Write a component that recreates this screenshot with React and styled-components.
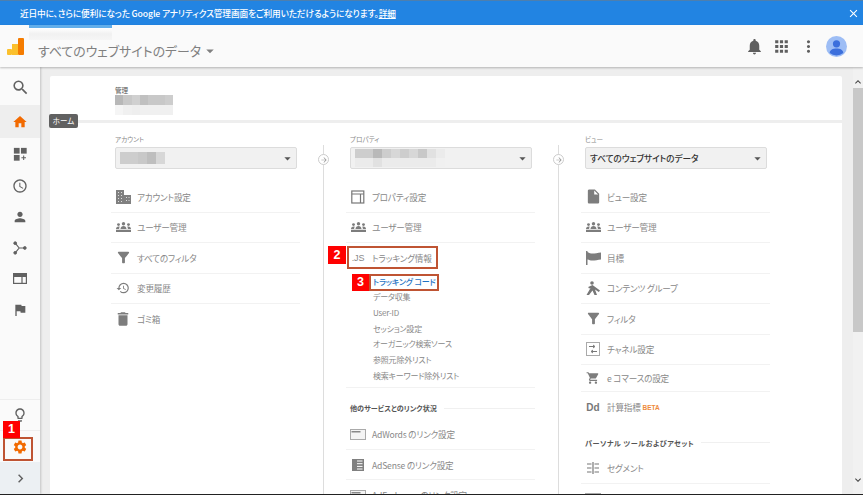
import React from 'react';
import styled, { createGlobalStyle } from 'styled-components';
import {
    MdSearch, MdHome, MdAccessTime, MdPerson, MdFlag, MdLightbulbOutline, MdSettings,
    MdChevronRight, MdFilterAlt, MdHistory, MdDelete, MdInsertDriveFile,
    MdShoppingCart, MdNotifications, MdApps, MdMoreVert, MdArrowDropDown, MdClose,
    MdKeyboardArrowUp, MdKeyboardArrowDown, MdArrowForward
} from 'react-icons/md';

const FONT = '"Noto Sans CJK JP", "Noto Sans", "Liberation Sans", sans-serif';

const GlobalStyle = createGlobalStyle`
    html, body {
        margin: 0;
        height: 100%;
        overflow: hidden;
        background: #eee;
    }
    body {
        font-family: ${FONT};
        font-feature-settings: "palt";
    }
`;

const Page = styled('div')`
    width: 863px;
    height: 495px;
    display: flex;
    flex-direction: column;
    overflow: hidden;
    border-bottom: 1px solid #222;
    box-sizing: border-box;
`;

const Banner = styled('div')`
    height: 25px;
    flex: none;
    box-sizing: border-box;
    background: #2284e2;
    border-top: 1px solid #4d7fae;
    color: #fff;
    display: flex;
    align-items: center;
    justify-content: space-between;
    padding: 0 3px 0 20px;
    font-size: 8.7px;
    letter-spacing: -.13px;
    font-weight: 500;
    a {
        color: #fff;
        text-decoration: underline;
    }
`;

const Header = styled('header')`
    height: 42px;
    flex: none;
    position: relative;
    z-index: 2;
    background: #fafafa;
    box-shadow: 0 1px 2px rgba(0, 0, 0, .25);
    display: flex;
    align-items: center;
    padding: 0 16px 0 7px;
`;

const Redaction = styled('div')`
    position: absolute;
    left: 29px;
    top: 0;
    width: 83px;
    height: 15px;
    background: linear-gradient(#62aeea 0, #62aeea 3px, #fff 3px, #f1f1f1 9px, #f6f6f6 15px);
`;

const TitleBlock = styled('div')`
    margin-left: 14px;
    padding-top: 9px;
`;

const Title = styled('div')`
    font-size: 12.9px;
    line-height: 18px;
    color: #808080;
    display: flex;
    align-items: center;
    svg {
        font-size: 18px;
        margin-left: 0;
    }
`;

const HeaderTools = styled('div')`
    margin-left: auto;
    display: flex;
    align-items: center;
    color: #5f5f5f;
    font-size: 19px;
    gap: 8px;
    svg {
        display: block;
    }
`;

const Body = styled('div')`
    flex: 1;
    min-height: 0;
    display: flex;
`;

const Rail = styled('nav')`
    width: 40px;
    flex: none;
    position: relative;
    background: #fafafa;
    box-shadow: 1px 0 2px rgba(0, 0, 0, .18);
    display: flex;
    flex-direction: column;
    padding-top: 3px;
    box-sizing: border-box;
`;

const RailItem = styled('div')`
    height: ${(p) => p.$h || 31}px;
    flex: none;
    display: flex;
    align-items: center;
    justify-content: center;
    font-size: ${(p) => p.$size || 16}px;
    color: ${(p) => (p.$accent ? '#f26a00' : '#616161')};
    background: ${(p) => p.$bg || 'transparent'};
    border-top: ${(p) => (p.$line ? '1px solid #eee' : '0')};
    box-sizing: border-box;
    position: relative;
`;

const RailSpacer = styled('div')`
    flex: 1;
`;

const Badge = styled('span')`
    position: absolute;
    left: ${(p) => p.$left}px;
    top: ${(p) => p.$top}px;
    width: ${(p) => p.$size}px;
    height: ${(p) => p.$size}px;
    background: #f00;
    color: #fff;
    font: 700 12.5px/${(p) => p.$size}px "Liberation Sans", sans-serif;
    text-align: center;
    z-index: 3;
`;

const Marker = styled('span')`
    position: absolute;
    left: ${(p) => p.$left}px;
    top: ${(p) => p.$top}px;
    width: ${(p) => p.$w}px;
    height: ${(p) => p.$h}px;
    box-sizing: border-box;
    border: 2px solid #bf5433;
    z-index: 2;
`;

const Tip = styled('div')`
    position: absolute;
    left: 49px;
    top: 47px;
    height: 14px;
    width: 29px;
    border-radius: 2px;
    background: #616161;
    color: #fff;
    font-size: 7.5px;
    line-height: 14px;
    text-align: center;
    z-index: 4;
`;

const Content = styled('main')`
    flex: 1;
    min-width: 0;
    padding: 9px 11px 0 10px;
    background: #eee;
`;

const Card = styled('div')`
    background: #fff;
    height: 100%;
    border-radius: 2px 2px 0 0;
    overflow: hidden;
    position: relative;
`;

const CardHead = styled('div')`
    height: 47px;
    box-sizing: border-box;
    padding: 10px 0 0 65px;
    border-bottom: 3px solid #eee;
`;

const Tiny = styled('div')`
    font-size: 6.6px;
    line-height: 9px;
    color: ${(p) => (p.$dark ? '#555' : '#8a8a8a')};
`;

const Columns = styled('div')`
    display: flex;
    margin-left: 61px;
    padding-top: 12px;
    gap: 46px;
`;

const Column = styled('section')`
    width: 189px;
    flex: none;
    position: relative;
`;

const RuleLine = styled('span')`
    position: absolute;
    left: 212px;
    top: 10px;
    width: 1px;
    height: 400px;
    background: #ddd;
`;

const RuleKnob = styled('span')`
    position: absolute;
    left: 207px;
    top: 19px;
    width: 11px;
    height: 11px;
    box-sizing: border-box;
    border-radius: 50%;
    border: 1px solid #ccc;
    background: #fff;
    color: #999;
    font-size: 8px;
    display: flex;
    align-items: center;
    justify-content: center;
`;

const SelectLabel = styled(Tiny)`
    padding-left: 4px;
    height: 10px;
`;

const Select = styled('div')`
    margin: 2px 3px 13px 4px;
    height: 22px;
    box-sizing: border-box;
    background: #f1f1f1;
    border: 1px solid #dcdcdc;
    border-radius: 2px;
    display: flex;
    align-items: center;
    padding-left: 4px;
    font-size: 8.7px;
    letter-spacing: -.1px;
    font-weight: 500;
    color: #333;
    svg {
        margin-left: auto;
        font-size: 15px;
        color: #555;
        flex: none;
        margin-right: 1px;
    }
`;

const Row = styled('div')`
    height: ${(p) => p.$h || 30.5}px;
    box-sizing: border-box;
    display: flex;
    align-items: center;
    position: relative;
    border-bottom: ${(p) => (p.$plain ? '0' : '1px solid #f2f2f2')};
    font-size: 8.6px;
    letter-spacing: -.2px;
    color: #888;
    white-space: nowrap;
`;

const RowIcon = styled('span')`
    width: 26px;
    flex: none;
    box-sizing: border-box;
    padding-right: 2px;
    font-size: 15px;
    color: #7d7d7d;
    display: flex;
    align-items: center;
    justify-content: center;
    svg {
        display: block;
    }
`;

const Beta = styled('span')`
    color: #ee8a3c;
    font: 700 6.5px "Liberation Sans", sans-serif;
    letter-spacing: 0;
    margin-left: 2px;
`;

const DdMark = styled('span')`
    font: 700 10px "Liberation Sans", sans-serif;
    color: #777;
    letter-spacing: .2px;
`;

const JsMark = styled('span')`
    font: 9px "Liberation Sans", sans-serif;
    color: #888;
`;

const SubList = styled('div')`
    padding-bottom: 4px;
    border-bottom: 1px solid #f2f2f2;
`;

const SubItem = styled('div')`
    height: 15.7px;
    line-height: 15.7px;
    padding-left: 27px;
    font-size: 8px;
    letter-spacing: -.2px;
    color: ${(p) => (p.$active ? '#1f73c2' : '#888')};
    font-weight: ${(p) => (p.$active ? 500 : 400)};
    position: relative;
`;

const Section = styled('div')`
    margin: 12px 0 3px 4px;
    height: 16px;
    display: flex;
    align-items: center;
    gap: 7px;
    font-size: 7.1px;
    letter-spacing: ${(p) => (p.$wide ? '.5px' : '0')};
    font-weight: 700;
    color: #555;
    white-space: nowrap;
    &::after {
        content: '';
        flex: 1;
        height: 1px;
        background: #f0f0f0;
    }
`;

const MosaicGrid = styled('div')`
    display: grid;
    grid-template-columns: repeat(${(p) => p.$cols}, ${(p) => p.$w}px);
    grid-auto-rows: ${(p) => p.$h}px;
    flex: none;
`;

const MosaicCell = styled('span')`
    background: ${(p) => p.$c};
`;

const Logo = styled('svg')`
    width: 17px;
    height: 17px;
    flex: none;
    margin-top: 1px;
`;

const Scrollbar = styled('div')`
    width: 10px;
    flex: none;
    background: #f1f1f1;
    display: flex;
    flex-direction: column;
    align-items: center;
    color: #444;
    font-size: 12px;
    padding-bottom: 8px;
    box-sizing: border-box;
`;

const ScrollUp = styled('div')`
    height: 21px;
    display: flex;
    align-items: flex-end;
`;

const ScrollThumb = styled('div')`
    width: 10px;
    height: 244px;
    background: #c8c8c8;
`;

const ScrollFill = styled('div')`
    flex: 1;
`;

// 目隠しのモザイク部分
const Mosaic = ({ rows, w = 9, h = 9 }) => (
    <MosaicGrid $cols={rows[0].length} $w={w} $h={h}>
        {rows.flatMap((row, y) => row.map((c, x) => <MosaicCell key={`${y}-${x}`} $c={c} />))}
    </MosaicGrid>
);

const shade = (list) => list.map((v) => `rgb(${v},${v},${v})`);

const BuildingIcon = () => (
    <svg width="15" height="14" viewBox="0 0 15 14" fill="#808080">
        <path d="M0 0h8v14H0zM8 5h7v9H8z" />
        <path d="M2 2h1v1H2zM5 2h1v1H5zM2 5h1v1H2zM5 5h1v1H5zM2 8h1v1H2zM5 8h1v1H5zM2 11h1v1H2zM5 11h1v1H5zM10 7h1v1h-1zM12.500 7h1v1h-1zM10 10h1v1h-1zM12.500 10h1v1h-1z" fill="#ddd" />
    </svg>
);

const GroupIcon = () => (
    <svg width="15" height="10" viewBox="0 0 15 10" fill="#7d7d7d">
        <circle cx="2.500" cy="2.600" r="1.400" />
        <circle cx="7.500" cy="1.800" r="1.700" />
        <circle cx="12.500" cy="2.600" r="1.400" />
        <path d="M4.500 7c0-2 1.500-3 3-3s3 1 3 3zM0 7c0-1.500 1-2.500 2.500-2.500.6 0 1 .1 1.300.3C3.300 5.400 3.100 6.200 3.100 7zM15 7c0-1.500-1-2.500-2.500-2.500-.6 0-1 .1-1.300.3.500.6.700 1.400.7 2.200zM0 7.700h15V10H0z" />
    </svg>
);

const FrameIcon = () => (
    <svg width="14" height="14" viewBox="0 0 14 14" fill="none" stroke="#777" strokeWidth="1.200">
        <rect x=".8" y="1" width="12" height="12" />
        <path d="M.8 4h12M9.500 4v9" />
    </svg>
);

const GoalFlagIcon = () => (
    <svg width="15" height="14" viewBox="0 0 15 14" fill="#7d7d7d">
        <path d="M0 0h1.500v14H0zM1.500 1c2 1 3 1.500 5 1.500S12 2 15 1.500v7c-3 .5-6 1-8.500 1s-3-.6-5-1z" />
    </svg>
);

const ContentIcon = () => (
    <svg width="15" height="15" viewBox="0 0 15 15" fill="#777">
        <circle cx="6" cy="2" r="1.800" />
        <path d="M6.500 4 14 9.500 12.800 11 9 8.500l2 5.500H8.500L6.500 9.500 3 14H.5l4-7-1.500.5L2.200 6z" />
    </svg>
);

const ChannelIcon = () => (
    <svg width="14" height="14" viewBox="0 0 14 14" fill="none" stroke="#777">
        <rect x=".5" y=".5" width="13" height="13" stroke="#aaa" />
        <path d="M3 4.500h5.500M7 3l2 1.500L7 6M11 9.500H5.500M7 8 5 9.500 7 11" strokeWidth="1" />
    </svg>
);

const SegmentIcon = () => (
    <svg width="14" height="14" viewBox="0 0 14 14" stroke="#777" strokeWidth="1.200">
        <path d="M7 1v12M1 3h4.500M1 7h4.500M1 11h4.500M8.500 3H13M8.500 7H13M8.500 11H13" />
    </svg>
);

const AdWordsIcon = () => (
    <svg width="16" height="11" viewBox="0 0 16 11" fill="none">
        <rect x=".5" y=".5" width="15" height="10" fill="#f4f4f4" stroke="#aaa" />
        <rect x="1.500" y="2" width="9" height="1.500" fill="#888" />
    </svg>
);

const AdSenseIcon = () => (
    <svg width="12" height="12" viewBox="0 0 12 12">
        <rect width="12" height="12" fill="#808080" />
        <path d="M5 2h5.500M5 4.700h5.500M5 7.400h5.500M5 10h5.500" stroke="#fff" />
    </svg>
);

const DashIcon = () => (
    <svg width="15" height="15" viewBox="0 0 17 17" fill="#616161">
        <rect x="1" y="1" width="6.500" height="6.500" />
        <rect x="9" y="1" width="6.500" height="6.500" />
        <rect x="1" y="9" width="6.500" height="6.500" />
        <path d="M11.500 9.500h1.200v2h2v1.200h-2v2h-1.200v-2h-2v-1.200h2z" />
    </svg>
);

const BranchIcon = () => (
    <svg width="14" height="14" viewBox="0 0 16 16" fill="#616161" stroke="#616161">
        <circle cx="2.500" cy="2.500" r="1.600" />
        <circle cx="2.500" cy="13.500" r="1.600" />
        <circle cx="13.500" cy="8" r="1.600" />
        <path d="M2.500 2.500 7 8l-4.500 5.500M7 8h6.500" fill="none" strokeWidth="1.300" />
    </svg>
);

const WebIcon = () => (
    <svg width="14" height="11" viewBox="0 0 14 11" fill="none" stroke="#616161" strokeWidth="1.200">
        <rect x=".6" y=".6" width="12.800" height="9.800" />
        <path d="M.6 3.500h12.800M9 3.500v7" />
        <rect x="1" y="1" width="12" height="2.500" fill="#616161" stroke="none" />
    </svg>
);

const Avatar = () => (
    <svg width="21" height="21" viewBox="0 0 21 21">
        <circle cx="10.500" cy="10.500" r="10.500" fill="#9dbdf5" />
        <circle cx="10.500" cy="7.800" r="3.600" fill="#3c6fdc" />
        <path d="M3.700 17c0-3 3.400-4.400 6.800-4.400s6.800 1.400 6.800 4.400a10.500 10.500 0 0 1-13.600 0z" fill="#3c6fdc" />
    </svg>
);

const ACCOUNT_ROWS = [
    { icon: <BuildingIcon />, label: 'アカウント設定' },
    { icon: <GroupIcon />, label: 'ユーザー管理' },
    { icon: <MdFilterAlt size={17} />, label: 'すべてのフィルタ' },
    { icon: <MdHistory size={14} />, label: '変更履歴' },
    { icon: <MdDelete size={18} />, label: 'ゴミ箱', plain: true }
];

const TRACKING_ITEMS = ['データ収集', 'User-ID', 'セッション設定', 'オーガニック検索ソース', '参照元除外リスト', '検索キーワード除外リスト'];

const VIEW_ROWS = [
    { icon: <MdInsertDriveFile size={17} />, label: 'ビュー設定' },
    { icon: <GroupIcon />, label: 'ユーザー管理' },
    { icon: <GoalFlagIcon />, label: '目標' },
    { icon: <ContentIcon />, label: 'コンテンツ グループ' },
    { icon: <MdFilterAlt size={17} />, label: 'フィルタ' },
    { icon: <ChannelIcon />, label: 'チャネル設定' },
    { icon: <MdShoppingCart size={14} />, label: 'e コマースの設定', h: 27 }
];

const ListRow = ({ icon, label, plain, h, children }) => (
    <Row $plain={plain} $h={h}>
        <RowIcon>{icon}</RowIcon>
        <span>{label}</span>
        {children}
    </Row>
);

const ColumnRule = () => (
    <>
        <RuleLine />
        <RuleKnob><MdArrowForward /></RuleKnob>
    </>
);

const App = () => {
    return (
        <Page>
            <GlobalStyle />
            <Banner>
                <span>近日中に、さらに便利になった Google アナリティクス管理画面をご利用いただけるようになります。<a>詳細</a></span>
                <MdClose size={13} />
            </Banner>
            <Header>
                <Redaction />
                <Logo viewBox="0 0 17 17">
                    <rect x="0" y="11" width="5" height="6" rx="1" fill="#fbc02d" />
                    <rect x="5" y="6" width="6" height="11" fill="#fbc02d" />
                    <rect x="11" y="0" width="6" height="17" rx="1" fill="#f57c00" />
                </Logo>
                <TitleBlock>
                    <Title>すべてのウェブサイトのデータ<MdArrowDropDown /></Title>
                </TitleBlock>
                <HeaderTools>
                    <MdNotifications />
                    <MdApps />
                    <MdMoreVert />
                    <Avatar />
                </HeaderTools>
            </Header>
            <Body>
                <Rail>
                    <RailItem $h={35} $size={19}><MdSearch /></RailItem>
                    <RailItem $h={33} $accent $bg="#eeeeee"><MdHome /></RailItem>
                    <RailItem $h={32}><DashIcon /></RailItem>
                    <RailItem><MdAccessTime /></RailItem>
                    <RailItem><MdPerson /></RailItem>
                    <RailItem><BranchIcon /></RailItem>
                    <RailItem><WebIcon /></RailItem>
                    <RailItem><MdFlag /></RailItem>
                    <RailSpacer />
                    <RailItem $line><MdLightbulbOutline /></RailItem>
                    <RailItem $line $h={32} $accent>
                        <MdSettings />
                        <Badge $left={3} $top={-10} $size={17}>1</Badge>
                        <Marker $left={3} $top={6} $w={30} $h={24} />
                    </RailItem>
                    <RailItem $h={32} $bg="#ecf0f3" $size={17}><MdChevronRight /></RailItem>
                    <Tip>ホーム</Tip>
                </Rail>
                <Content>
                    <Card>
                        <CardHead>
                            <Tiny $dark>管理</Tiny>
                            <Mosaic w={8.3} h={10} rows={[
                                shade([184, 200, 208, 192, 200, 200, 205]),
                                shade([245, 240, 238, 240, 240, 240, 240])
                            ]} />
                        </CardHead>
                        <Columns>
                            <Column>
                                <SelectLabel>アカウント</SelectLabel>
                                <Select>
                                    <Mosaic w={9} h={12} rows={[shade([205, 205, 200, 190, 215])]} />
                                    <MdArrowDropDown />
                                </Select>
                                {ACCOUNT_ROWS.map((r) => <ListRow key={r.label} {...r} />)}
                                <ColumnRule />
                            </Column>
                            <Column>
                                <SelectLabel>プロパティ</SelectLabel>
                                <Select>
                                    <Mosaic w={9} h={9} rows={[
                                        shade([205, 205, 185, 205, 215, 205, 215, 200, 225, 235]),
                                        shade([235, 235, 225, 235, 235, 235, 235, 235, 235, 240])
                                    ]} />
                                    <MdArrowDropDown />
                                </Select>
                                <ListRow icon={<FrameIcon />} label="プロパティ設定" />
                                <ListRow icon={<GroupIcon />} label="ユーザー管理" />
                                <ListRow icon={<JsMark>.JS</JsMark>} label="トラッキング情報" plain>
                                    <Badge $left={-18} $top={3} $size={18}>2</Badge>
                                    <Marker $left={1} $top={3} $w={91} $h={23} />
                                </ListRow>
                                <SubList>
                                    <SubItem $active>
                                        トラッキング コード
                                        <Badge $left={6} $top={0} $size={17}>3</Badge>
                                        <Marker $left={23} $top={0} $w={70} $h={17} />
                                    </SubItem>
                                    {TRACKING_ITEMS.map((t) => <SubItem key={t}>{t}</SubItem>)}
                                </SubList>
                                <Section>他のサービスとのリンク状況</Section>
                                <ListRow icon={<AdWordsIcon />} label="AdWords のリンク設定" />
                                <ListRow icon={<AdSenseIcon />} label="AdSense のリンク設定" />
                                <ListRow icon={<AdWordsIcon />} label="AdExchange のリンク設定" />
                                <ColumnRule />
                            </Column>
                            <Column>
                                <SelectLabel>ビュー</SelectLabel>
                                <Select>
                                    すべてのウェブサイトのデータ
                                    <MdArrowDropDown />
                                </Select>
                                {VIEW_ROWS.map((r) => <ListRow key={r.label} {...r} />)}
                                <ListRow icon={<DdMark>Dd</DdMark>} label="計算指標" plain>
                                    <Beta>BETA</Beta>
                                </ListRow>
                                <Section $wide>パーソナル ツールおよびアセット</Section>
                                <ListRow icon={<SegmentIcon />} label="セグメント" />
                                <ListRow icon={<AdWordsIcon />} label="" />
                            </Column>
                        </Columns>
                    </Card>
                </Content>
                <Scrollbar>
                    <ScrollUp><MdKeyboardArrowUp /></ScrollUp>
                    <ScrollThumb />
                    <ScrollFill />
                    <MdKeyboardArrowDown />
                </Scrollbar>
            </Body>
        </Page>
    );
};

export default App;
